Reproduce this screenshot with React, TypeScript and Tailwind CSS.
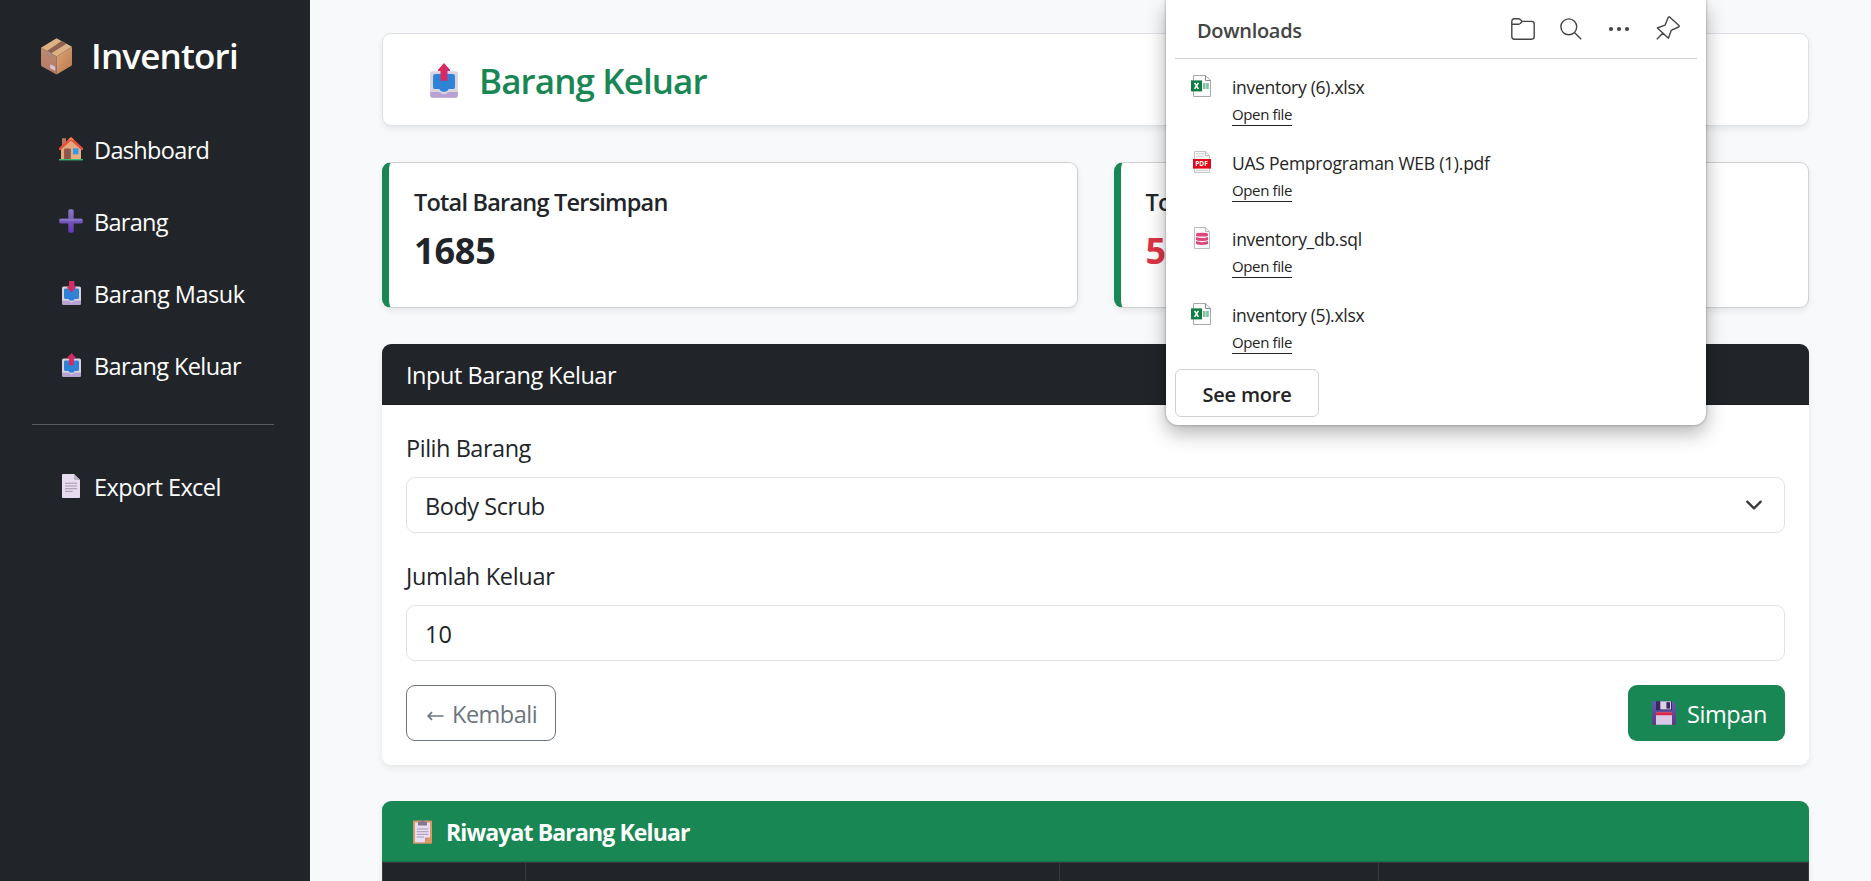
import type { ReactNode } from "react";

type IconProps = { className?: string };

function BoxIcon({ className }: IconProps) {
  return (
    <svg viewBox="0 0 31 37" className={className}>
      <defs>
        <linearGradient id="boxL" x1="0" y1="0" x2="0" y2="1">
          <stop offset="0" stopColor="#c08a72" />
          <stop offset="1" stopColor="#b27865" />
        </linearGradient>
        <linearGradient id="boxR" x1="0" y1="0" x2="1" y2="1">
          <stop offset="0" stopColor="#dda57c" />
          <stop offset="1" stopColor="#b97848" />
        </linearGradient>
      </defs>
      <path d="M15.5 0.3 31 8.8 15.5 18.5 0 9.8Z" fill="#dcb184" />
      <path d="M0 9.8 15.5 18.5V36.5L1 28.4Q0 27.8 0 26.8Z" fill="url(#boxL)" />
      <path d="M31 8.8 15.5 18.5V36.5L30 28Q31 27.3 31 26.2Z" fill="url(#boxR)" />
      <path d="M20.5 3 25.4 5.7 10.4 15.2V19.4L6.2 17V12.8Z" fill="#8f6153" />
      <path d="M6.2 12.8 10.4 15.2V19.4L6.2 17Z" fill="#a98d80" />
      <path d="M9.2 26.2 14.2 28.8V32.8L9.2 30.2Z" fill="#d9c5dc" />
    </svg>
  );
}

function HouseIcon({ className }: IconProps) {
  return (
    <svg viewBox="0 0 24 24" className={className}>
      <defs>
        <linearGradient id="houseW" x1="0" y1="0" x2="1" y2="1">
          <stop offset="0" stopColor="#e0a173" />
          <stop offset="1" stopColor="#e9b386" />
        </linearGradient>
      </defs>
      <path d="M3 1.2h4V9H3Z" fill="#b3775c" />
      <path d="M2 12 12 3l10 9v10.5H2Z" fill="url(#houseW)" />
      <path d="M0.9 11.9 12 1.7l11.1 10.2" fill="none" stroke="#e8503f" strokeWidth="2.6" strokeLinecap="round" />
      <path d="M9.6 3.2 12 1.2l2.4 2" fill="none" stroke="#ff7a3c" strokeWidth="1.6" />
      <path d="M5 13q0-1.4 1.4-1.4h4.1q1.4 0 1.4 1.4v9.5H5Z" fill="#92594e" />
      <path d="M8.4 11.8V22" stroke="#7d4a44" strokeWidth="0.6" />
      <rect x="14" y="11.3" width="5.4" height="6" fill="#2b9cec" />
      <path d="M0 22.1h24v1.3H0Z" fill="#38c574" />
    </svg>
  );
}

function PlusIcon({ className }: IconProps) {
  return (
    <svg viewBox="0 0 24 24" className={className}>
      <defs>
        <linearGradient id="plusG" x1="0" y1="0" x2="0" y2="1">
          <stop offset="0" stopColor="#8a78c4" />
          <stop offset="0.5" stopColor="#7456b8" />
          <stop offset="1" stopColor="#6a35c0" />
        </linearGradient>
      </defs>
      <path d="M9.3 2Q9.3 0.3 11 0.3h2Q14.7 0.3 14.7 2V9.6H22.2Q23.9 9.6 23.9 11.2V12.8Q23.9 14.4 22.2 14.4H14.7V22Q14.7 23.7 13 23.7H11Q9.3 23.7 9.3 22V14.4H1.8Q0.1 14.4 0.1 12.8V11.2Q0.1 9.6 1.8 9.6H9.3Z" fill="url(#plusG)" />
      <path d="M1.3 10.9H22.7" stroke="#9384c8" strokeWidth="1.2" />
    </svg>
  );
}

function TrayIcon({ className, up }: IconProps & { up?: boolean }) {
  return (
    <svg viewBox="0 0 19 24" className={className}>
      <defs>
        <linearGradient id="arrowG" x1="0" y1="0" x2="1" y2="0">
          <stop offset="0" stopColor="#e02a45" />
          <stop offset="1" stopColor="#c92a86" />
        </linearGradient>
      </defs>
      <rect x="0" y="5.6" width="19" height="18.2" rx="1.6" fill="#d8d3df" />
      <path d="M0 19.8h6.8q.6 1.6 2.7 1.6t2.7-1.6H19v2.6q0 1.4-1.6 1.4H1.6Q0 23.8 0 22.4Z" fill="#b9a1d2" />
      <path d="M3.6 7.6H15.6q1.4 0 1.4 1.4v7.4q0 1.5-1.5 1.5h-2.9q-.5 1.9-3.1 1.9t-3.1-1.9H3.5Q2 17.9 2 16.4V9q0-1.4 1.6-1.4Z" fill="#2e83d6" />
      {up ? (
        <path d="M9.5 0 13.6 4.6V5.4H11.9V12.2H7.1V5.4H5.4V4.6Z" fill="url(#arrowG)" />
      ) : (
        <path d="M7 0H12.4V5.8H13.8V6.8L9.5 11.6 5.2 6.8V5.8H7Z" fill="url(#arrowG)" />
      )}
    </svg>
  );
}

function PageIcon({ className }: IconProps) {
  return (
    <svg viewBox="0 0 18 24" className={className}>
      <path d="M0.8 0H12l6 6V23.2q0 .8-.8.8H.8Q0 24 0 23.2V.8Q0 0 .8 0Z" fill="#e6dcef" />
      <path d="M12 0l6 6h-5.2q-.8 0-.8-.8Z" fill="#bcb1c4" />
      <path d="M3 9.2h12M3 12h12M3 14.7h12M3 17.3h7.6" stroke="#a196ab" strokeWidth="1" />
    </svg>
  );
}

function ClipboardIcon({ className }: IconProps) {
  return (
    <svg viewBox="0 0 19 24" className={className}>
      <rect x="0" y="0.5" width="19" height="23.3" rx="1.2" fill="#dd9668" />
      <path d="M2 2.6H17V17.4L12 22.2H2Z" fill="#e8def2" />
      <path d="M17 17.4 12 22.2V18.2q0-.8.8-.8Z" fill="#c98f7c" />
      <path d="M17 17.4V22.2H12Z" fill="#e09a58" />
      <path d="M5 2.2Q5 1.4 5.8 1.4H7.6Q8.2 0 9.5 0t1.9 1.4h1.8q.8 0 .8.8V5.4H5Z" fill="#85788f" />
      <path d="M3.8 9h11.6M3.8 11.7h11.6M3.8 14.3h11.6M3.8 17h7.2" stroke="#a699b2" strokeWidth="1" />
    </svg>
  );
}

function FloppyIcon({ className }: IconProps) {
  return (
    <svg viewBox="0 0 24 24" className={className}>
      <defs>
        <linearGradient id="flopG" x1="0" y1="0" x2="0" y2="1">
          <stop offset="0" stopColor="#5c5fae" />
          <stop offset="1" stopColor="#5e3885" />
        </linearGradient>
      </defs>
      <path d="M1 0.3H20.6L24 3.6V23.2q0 .6-.8.6H1Q0 23.8 0 23V1.2Q0 .3 1 .3Z" fill="url(#flopG)" />
      <path d="M4 0.3H20V9.2H4Z" fill="#3a2560" />
      <path d="M8.3 0.3H19V8.4H8.3Z" fill="#dcd2e8" />
      <path d="M14.4 1.2H18V7.6H14.4Z" fill="#3a2a62" />
      <path d="M4 12.2q0-1 1-1H19q1 0 1 1V23.8H4Z" fill="#dac9e6" />
      <path d="M4 12.2q0-1 1-1H19q1 0 1 1V14.2H4Z" fill="#dc2544" />
    </svg>
  );
}

function XlsxIcon() {
  return (
    <svg viewBox="0 0 20 22" className="mr-0.5 h-[22px] w-5 shrink-0">
      <path d="M2.5 0.5H14.6L19.5 5.4V21.5H2.5Z" fill="#fbfbfb" stroke="#a9a9a9" />
      <path d="M14.5 0.5V5.5H19.5" fill="none" stroke="#8a8a8a" />
      <path d="M12 8h2.6v6H12ZM15.2 8h2.6v6h-2.6Z" fill="#7cc4a0" />
      <rect x="0" y="5.4" width="11" height="11" fill="#107c41" />
      <path d="M3.6 7.9 7.4 13.9M7.4 7.9 3.6 13.9" stroke="#fff" strokeWidth="1.6" />
    </svg>
  );
}

function PdfIcon() {
  return (
    <span className="relative block h-[22px] w-[18px]">
      <svg viewBox="0 0 18 22" className="h-[22px] w-[18px]">
        <path d="M1.5 0.5H12.4L16.5 4.6V21.5H1.5Z" fill="#fafafa" stroke="#c4c4c4" />
        <path d="M12.3 0.5V4.7H16.5" fill="none" stroke="#b5b5b5" />
        <path d="M3 2.9h8M3 5.6h8M3 19.4h12" stroke="#cfcfcf" />
        <rect x="0" y="8" width="18" height="9.6" fill="#e0091a" />
      </svg>
      <span className="absolute inset-x-0 top-2 text-center font-['Open_Sans',sans-serif] text-[6.5px] leading-[10px] font-bold text-white">
        PDF
      </span>
    </span>
  );
}

function SqlIcon() {
  return (
    <svg viewBox="0 0 16 22" className="h-[22px] w-4">
      <path d="M0.5 0.5H11.4L15.5 4.6V21.5H0.5Z" fill="#fafafa" stroke="#bdbdbd" />
      <path d="M11.4 0.5V4.6H15.5" fill="none" stroke="#b5b5b5" />
      <path d="M2 7.2Q2 5.8 8 5.8t6 1.4V8.4Q14 9.6 8 9.6T2 8.4Z" fill="#e0457b" />
      <path d="M2 9.9q1.6 1.1 6 1.1t6-1.1v2.8q0 1.2-6 1.2t-6-1.2Z" fill="#e0457b" />
      <path d="M2 14.1q1.6 1.1 6 1.1t6-1.1v2.5q0 1.4-6 1.4t-6-1.4Z" fill="#e0457b" />
    </svg>
  );
}

function NavItem({ icon, children, spacing }: { icon: ReactNode; children: string; spacing: string }) {
  return (
    <a className="flex h-[72px] items-center pl-[59px] text-[23.5px] leading-9 text-white">
      <span className="flex w-6 justify-center">{icon}</span>
      <span className={`ml-[11px] pt-px ${spacing}`}>{children}</span>
    </a>
  );
}

function Sidebar() {
  return (
    <aside className="flex w-[310px] shrink-0 flex-col bg-[#212529]">
      <div className="flex h-[113px] items-start pt-[34px] pl-[41px]">
        <BoxIcon className="mt-1 h-[37px] w-[31px]" />
        <span className="ml-[19px] text-[35px] leading-[43px] font-semibold tracking-[-0.8px] text-white">Inventori</span>
      </div>
      <nav className="flex flex-col">
        <NavItem icon={<HouseIcon className="size-6" />} spacing="tracking-[-0.66px]">Dashboard</NavItem>
        <NavItem icon={<PlusIcon className="size-6" />} spacing="tracking-[-0.7px]">Barang</NavItem>
        <NavItem icon={<TrayIcon className="h-6 w-[19px]" />} spacing="tracking-[-0.48px]">Barang Masuk</NavItem>
        <NavItem icon={<TrayIcon up className="h-6 w-[19px]" />} spacing="tracking-[-0.6px]">Barang Keluar</NavItem>
        <div className="mt-[23px] mr-9 mb-[25px] ml-8 h-px bg-[#585c5f]" />
        <NavItem icon={<PageIcon className="h-6 w-[18px]" />} spacing="tracking-[-0.58px]">Export Excel</NavItem>
      </nav>
    </aside>
  );
}

function StatCard({ title, value, color }: { title: string; value: string; color: string }) {
  return (
    <div className="h-[146px] flex-1 rounded-[9px] border border-l-[7px] border-[#d0d1d2] border-l-[#198754] bg-white pr-6 pl-[25px] pt-[21px] shadow-[0_3px_6px_rgba(0,0,0,0.075)]">
      <div className="text-[23.5px] leading-9 font-semibold tracking-[-0.78px]">{title}</div>
      <div className={`mt-[9px] text-[36px] leading-[43px] font-bold tracking-[-0.2px] ${color}`}>{value}</div>
    </div>
  );
}

function FormCard() {
  return (
    <section className="h-[421px] shrink-0 overflow-hidden rounded-[9px] bg-white shadow-[0_3px_6px_rgba(0,0,0,0.075)]">
      <header className="h-[61px] border-b border-[#1b1e21] bg-[#212529] px-6 pt-[13px] text-[23.5px] leading-9 tracking-[-0.47px] text-white">
        Input Barang Keluar
      </header>
      <form className="flex flex-col px-6 pt-[25px]">
        <label className="text-[23.5px] leading-9 tracking-[-0.47px]">Pilih Barang</label>
        <div className="mt-[11px] flex h-14 items-center justify-between rounded-[9px] border border-[#dee2e6] pr-[21px] pl-[18px] text-[23.5px] leading-9">
          <span className="pt-px tracking-[-0.45px]">Body Scrub</span>
          <svg viewBox="0 0 16 16" className="size-[18px]" fill="none" stroke="#343a40" strokeWidth="2" strokeLinecap="round" strokeLinejoin="round">
            <path d="m2 5 6 6 6-6" />
          </svg>
        </div>
        <label className="mt-[25px] text-[23.5px] leading-9 tracking-[-0.32px]">Jumlah Keluar</label>
        <div className="mt-[11px] flex h-14 items-center rounded-[9px] border border-[#dee2e6] pt-px pl-[18px] text-[23.5px] leading-9">10</div>
        <div className="mt-6 flex justify-between">
          <button type="button" className="flex h-14 w-[150px] items-center rounded-[9px] border border-[#6c757d] pl-5 text-[23.5px] leading-9 text-[#6c757d]">
            <svg viewBox="0 0 17 10" className="mt-[5px] h-2.5 w-[17px]" fill="none" stroke="currentColor" strokeWidth="1.7">
              <path d="M16.5 5H1.5M5 1.2 1.2 5 5 8.8" />
            </svg>
            <span className="ml-2 pt-px tracking-[-0.5px]">Kembali</span>
          </button>
          <button type="button" className="flex h-14 w-[157px] items-center rounded-[9px] bg-[#198754] pl-6 text-[23.5px] leading-9 text-white">
            <FloppyIcon className="size-6" />
            <span className="ml-[11px] pt-px tracking-[-0.42px]">Simpan</span>
          </button>
        </div>
      </form>
    </section>
  );
}

function HistoryCard() {
  return (
    <section className="shrink-0 overflow-hidden rounded-t-[9px] bg-white shadow-[0_3px_6px_rgba(0,0,0,0.075)]">
      <header className="flex h-[61px] items-center border-b border-[#167048] bg-[#198754] pl-[31px] text-white">
        <ClipboardIcon className="mt-px h-6 w-[19px]" />
        <span className="ml-[14px] pt-0.5 text-[23px] leading-9 font-bold tracking-[-0.87px]">Riwayat Barang Keluar</span>
      </header>
      <div className="grid h-[60px] grid-cols-[143px_534px_319px_429px] border border-[#373b3e] bg-[#212529]">
        <div className="border-r border-[#373b3e]" />
        <div className="border-r border-[#373b3e]" />
        <div className="border-r border-[#373b3e]" />
      </div>
    </section>
  );
}

function DownloadRow({ icon, name, spacing }: { icon: ReactNode; name: string; spacing: string }) {
  return (
    <div className="flex h-[76px] text-[#242424]">
      <div className="mt-[14px] flex w-[66px] justify-center pl-[5px]">
        <div className="flex w-5 justify-center">{icon}</div>
      </div>
      <div className="flex flex-col items-start pt-[13px]">
        <span className={`pt-px text-[17.5px] leading-6 ${spacing}`}>{name}</span>
        <span className="mt-[5px] h-[22px] border-b border-[#242424] text-[15px] leading-5 tracking-[-0.38px]">Open file</span>
      </div>
    </div>
  );
}

function DownloadsPopup() {
  return (
    <div className="absolute top-0 left-[1166px] flex h-[425px] w-[540px] flex-col rounded-b-xl bg-white shadow-[0_0_3px_rgba(0,0,0,0.35),0_8px_20px_rgba(0,0,0,0.3)]">
      <div className="mx-[9px] flex h-[59px] justify-between border-b border-[#d1d1d1] pt-[15px] pr-[17px] pl-[22px]">
        <span className="pt-px text-[20px] leading-[30px] font-semibold tracking-[-0.3px] text-[#444]">Downloads</span>
        <div className="flex text-[#444]">
          <svg viewBox="0 0 24 22" className="mt-[3px] h-[22px] w-6" fill="none" stroke="currentColor" strokeWidth="1.4">
            <path d="M0.8 6V3.4Q0.8 0.8 3.4 0.8H7.6Q8.6 0.8 9.3 1.6L11.2 3.4H20.6Q23.2 3.4 23.2 6V18.6Q23.2 21.2 20.6 21.2H3.4Q0.8 21.2 0.8 18.6ZM0.8 6.2H7.6Q8.6 6.2 9.3 5.4L11.2 3.4" />
          </svg>
          <svg viewBox="0 0 22 22" className="mt-[3px] ml-[25px] size-[22px]" fill="none" stroke="currentColor" strokeWidth="1.4">
            <circle cx="8.8" cy="8.8" r="7.9" />
            <path d="M14.4 14.4 21.2 21.2" />
          </svg>
          <svg viewBox="0 0 24 24" className="mt-0.5 ml-[25px] size-6" fill="currentColor">
            <circle cx="4" cy="12" r="2.1" />
            <circle cx="12" cy="12" r="2.1" />
            <circle cx="20" cy="12" r="2.1" />
          </svg>
          <svg viewBox="0 0 24 24" className="mt-[1px] ml-[25px] size-6" fill="none" stroke="currentColor" strokeWidth="1.4" strokeLinejoin="round">
            <path d="M13.6 1 23 9.6Q23.6 10.4 22.6 11L15.2 14.4 12.4 22.2 1.4 12 9 9.2 12.2 1.6Q12.8 0.4 13.6 1ZM6.8 17.2 0.8 23.2" />
          </svg>
        </div>
      </div>
      <div className="mt-[2px] flex flex-col">
        <DownloadRow icon={<XlsxIcon />} name="inventory (6).xlsx" spacing="tracking-[-0.3px]" />
        <DownloadRow icon={<PdfIcon />} name="UAS Pemprograman WEB (1).pdf" spacing="tracking-[-0.24px]" />
        <DownloadRow icon={<SqlIcon />} name="inventory_db.sql" spacing="tracking-[-0.28px]" />
        <DownloadRow icon={<XlsxIcon />} name="inventory (5).xlsx" spacing="tracking-[-0.3px]" />
      </div>
      <button type="button" className="mt-1 ml-[9px] h-12 w-36 rounded-md border border-[#d1d1d1] pt-1 text-[20px] leading-[42px] font-semibold tracking-[-0.2px] text-[#242424]">
        See more
      </button>
    </div>
  );
}

export default function App() {
  return (
    <div className="relative flex h-screen overflow-hidden bg-[#f8f9fa] font-['Open_Sans',sans-serif] text-[#212529]">
      <Sidebar />
      <main className="flex min-w-0 flex-1 flex-col gap-9 overflow-hidden pt-[33px] pr-[62px] pl-[72px]">
        <div className="flex h-[93px] shrink-0 rounded-[9px] border border-[#dee2e6] bg-white pt-[25px] pl-[47px] shadow-[0_3px_6px_rgba(0,0,0,0.075)]">
          <TrayIcon up className="mt-1 h-[35px] w-[28px]" />
          <h1 className="ml-[21px] text-[35px] leading-[43px] font-semibold tracking-[-0.9px] text-[#198754]">Barang Keluar</h1>
        </div>
        <div className="flex shrink-0 gap-9">
          <StatCard title="Total Barang Tersimpan" value="1685" color="text-[#212529]" />
          <StatCard title="Total Barang Keluar" value="5" color="text-[#dc3545]" />
        </div>
        <FormCard />
        <HistoryCard />
      </main>
      <DownloadsPopup />
    </div>
  );
}
